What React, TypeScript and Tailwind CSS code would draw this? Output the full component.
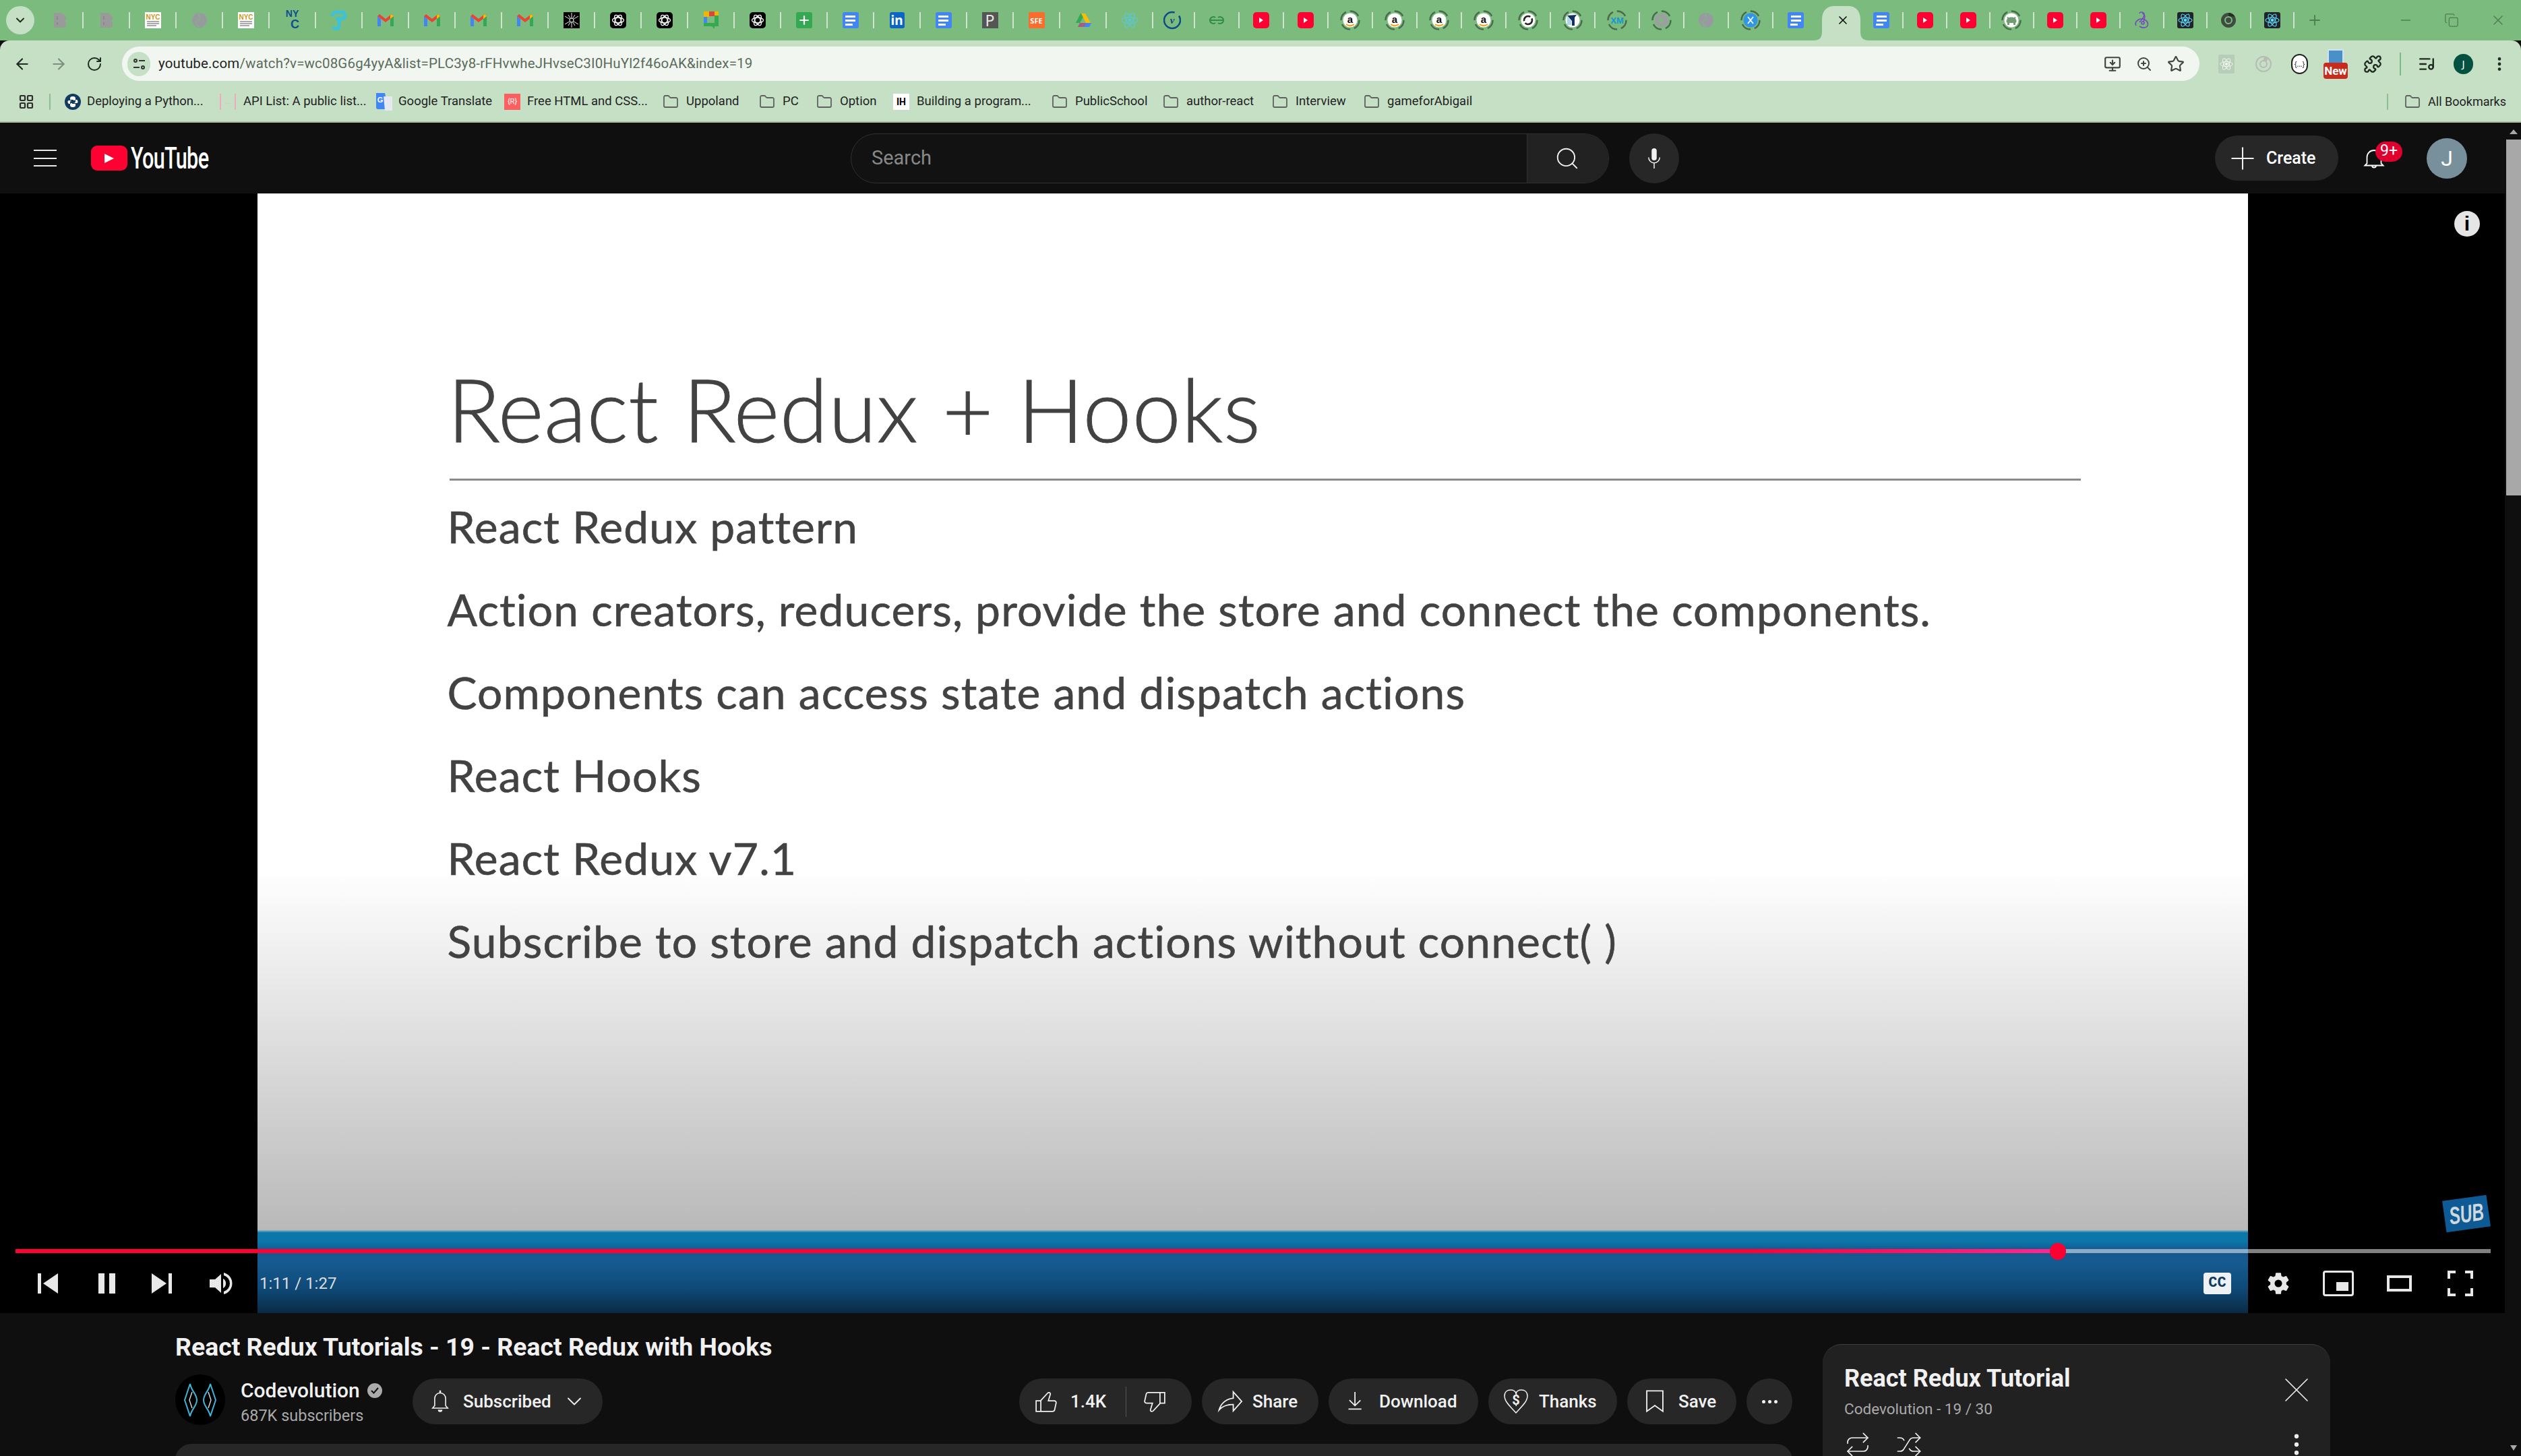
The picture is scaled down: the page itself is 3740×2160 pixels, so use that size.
import { ArrowLeft, ArrowRight, RotateCw, Star, ZoomIn, Puzzle, ListMusic, EllipsisVertical, Folder, LayoutGrid, Minus, Copy, X, Plus, Search, Repeat, Shuffle, ChevronDown, MonitorDown } from 'lucide-react';

type Kind =
  | 'gray' | 'nyc' | 'globe' | 'nycblue' | 'tp' | 'gmail' | 'web' | 'gpt' | 'meet' | 'sheets' | 'docs'
  | 'linkedin' | 'p' | 'sfe' | 'drive' | 'reactlight' | 'vcircle' | 'gfg' | 'yt' | 'amazon' | 'ringo'
  | 'ringy' | 'ringxm' | 'ringgray' | 'ringblue' | 'github' | 'redux' | 'reactdark' | 'chrome';

function Ring({ children }: { children: React.ReactNode }) {
  return (
    <svg width="30" height="30" viewBox="0 0 30 30">
      <circle cx="15" cy="15" r="13.5" fill="none" stroke="#4b6b4d" strokeWidth="2.5" strokeDasharray="15 6" />
      {children}
    </svg>
  );
}

function ReactAtom({ color, size = 24 }: { color: string; size?: number }) {
  return (
    <svg width={size} height={size} viewBox="0 0 24 24" fill="none" stroke={color} strokeWidth="1.2">
      <circle cx="12" cy="12" r="2" fill={color} />
      <ellipse cx="12" cy="12" rx="11" ry="4.3" />
      <ellipse cx="12" cy="12" rx="11" ry="4.3" transform="rotate(60 12 12)" />
      <ellipse cx="12" cy="12" rx="11" ry="4.3" transform="rotate(120 12 12)" />
    </svg>
  );
}

function Favicon({ kind }: { kind: Kind }) {
  switch (kind) {
    case 'gray':
      return (
        <svg width="24" height="24" viewBox="0 0 24 24">
          <path d="M3 1h12l6 6v5l-3 1 3 2v6l-3 2H3z" fill="#9a9a9a" />
          <path d="M8 6v5M8 15v4" stroke="#8a8a8a" strokeWidth="2" />
        </svg>
      );
    case 'nyc':
      return (
        <svg width="24" height="24" viewBox="0 0 24 24">
          <rect width="24" height="24" fill="#fff" />
          <text x="12" y="11" textAnchor="middle" fontSize="10" fontWeight="700" fill="#c79a1c" fontFamily="Liberation Sans">NYC</text>
          <path d="M3 14h18M3 17h18M3 20h14" stroke="#555" strokeWidth="1" />
        </svg>
      );
    case 'globe':
      return (
        <svg width="24" height="24" viewBox="0 0 24 24">
          <circle cx="12" cy="12" r="11" fill="#989aa0" />
          <path d="M12 2c-3 3 2 5 1 8s-5 1-6 5 4 6 5 7" stroke="#7bbb7e" strokeWidth="1.2" fill="none" />
        </svg>
      );
    case 'nycblue':
      return (
        <div className="w-[26px] h-[34px] flex flex-col items-center text-[#0f4c92] font-bold leading-none [font-family:'Liberation_Sans',sans-serif]">
          <span className="text-[14px]">NY</span>
          <span className="text-[18px] pl-[8px]">C</span>
        </div>
      );
    case 'tp':
      return (
        <svg width="26" height="30" viewBox="0 0 26 30" fill="none" stroke="#3cc3d8" strokeWidth="5">
          <path d="M8 13h9a5 5 0 0 0 0-10H9a6 6 0 0 0-6 6" />
          <path d="M13 10v14a4 4 0 0 1-8 0" />
        </svg>
      );
    case 'gmail':
      return (
        <svg width="24" height="18" viewBox="0 0 24 18">
          <path d="M0 3v15h5V7z" fill="#4285f4" />
          <path d="M19 7v11h5V3z" fill="#34a853" />
          <path d="M0 3l12 9 12-9-3-3-9 7-9-7z" fill="#ea4335" />
          <path d="M19 7l5-4-3-3-2 2z" fill="#fbbc04" />
        </svg>
      );
    case 'web':
      return (
        <svg width="24" height="24" viewBox="0 0 24 24">
          <rect width="24" height="24" fill="#000" />
          <path d="M12 1v22M2 6l20 12M22 6L2 18M7 4l10 16M17 4L7 20" stroke="#e8e8e8" strokeWidth="1" />
          <circle cx="12" cy="12" r="3" fill="#000" stroke="#fff" />
        </svg>
      );
    case 'gpt':
      return (
        <svg width="24" height="24" viewBox="0 0 24 24">
          <rect width="24" height="24" rx="5" fill="#000" />
          <g fill="none" stroke="#fff" strokeWidth="1.3">
            <ellipse cx="12" cy="12" rx="8.5" ry="4" />
            <ellipse cx="12" cy="12" rx="8.5" ry="4" transform="rotate(60 12 12)" />
            <ellipse cx="12" cy="12" rx="8.5" ry="4" transform="rotate(120 12 12)" />
          </g>
        </svg>
      );
    case 'meet':
      return (
        <svg width="24" height="28" viewBox="0 0 24 28">
          <path d="M1 1h8v8H1z" fill="#f4b400" />
          <path d="M9 1h8v7H9z" fill="#db4437" />
          <path d="M1 9h5v14H1z" fill="#4285f4" />
          <path d="M1 18h16v5H1z" fill="#34a853" />
          <path d="M17 1h6v22h-6v4l-4-4h4z" fill="#34a853" />
          <path d="M17 1h6v6h-6z" fill="#f4b400" />
        </svg>
      );
    case 'sheets':
      return (
        <div className="w-6 h-6 rounded-[3px] bg-[#34a853] flex items-center justify-center">
          <Plus size={20} strokeWidth={2.6} color="#fff" />
        </div>
      );
    case 'docs':
      return (
        <div className="w-6 h-6 rounded-[3px] bg-[#4285f4] flex flex-col items-center justify-center gap-[3px]">
          <div className="w-[15px] h-[3px] bg-white" />
          <div className="w-[15px] h-[3px] bg-white" />
          <div className="w-[11px] h-[3px] bg-white self-start ml-[4px]" />
        </div>
      );
    case 'linkedin':
      return (
        <div className="w-[22px] h-6 rounded-[3px] bg-[#0a66c2] flex items-center justify-center text-white text-[19px] font-bold leading-none">in</div>
      );
    case 'p':
      return <div className="w-6 h-6 bg-[#555555] flex items-center justify-center text-[#e8e8e8] text-[23px] leading-none">P</div>;
    case 'sfe':
      return <div className="w-6 h-6 rounded-[2px] bg-[#f96d2d] flex items-center justify-center text-white text-[11px] font-bold leading-none">SFE</div>;
    case 'drive':
      return (
        <svg width="24" height="24" viewBox="0 0 24 24">
          <path d="M8 2h7l-8 14H1z" fill="#34a853" />
          <path d="M9 2h6l8 14h-7z" fill="#fbbc04" />
          <path d="M4 22l3-6h17l-3 6z" fill="#4285f4" />
          <path d="M4 22l3-6h9l-3 6z" fill="#ea4335" opacity=".6" />
        </svg>
      );
    case 'reactlight':
      return <ReactAtom color="#5fc6cc" size={26} />;
    case 'vcircle':
      return (
        <svg width="26" height="30" viewBox="0 0 26 30">
          <circle cx="13" cy="15" r="12" fill="#7bbb7e" stroke="#0d4a86" strokeWidth="2.5" strokeDasharray="60 8" />
          <text x="13" y="20" textAnchor="middle" fontSize="15" fontStyle="italic" fontWeight="700" fill="#0d4a86" fontFamily="Liberation Serif">v</text>
        </svg>
      );
    case 'gfg':
      return (
        <svg width="24" height="14" viewBox="0 0 24 14" fill="none" stroke="#2f8d46" strokeWidth="2">
          <path d="M12 7H2a5 5 0 0 1 8-4M12 7h10a5 5 0 0 0-8-4M2 7a5 5 0 0 0 8 4M22 7a5 5 0 0 1-8 4" />
        </svg>
      );
    case 'yt':
      return (
        <div className="w-6 h-6 rounded-[5px] bg-[#ff0033] flex items-center justify-center">
          <div className="w-0 h-0 border-y-[4px] border-y-transparent border-l-[6px] border-l-white" />
        </div>
      );
    case 'amazon':
      return (
        <Ring>
          <circle cx="15" cy="15" r="10.5" fill="#fff" />
          <text x="15" y="19" textAnchor="middle" fontSize="15" fontWeight="700" fill="#111" fontFamily="Liberation Sans">a</text>
          <path d="M9 21c4 3 8 3 12 0" stroke="#f90" strokeWidth="1.8" fill="none" />
        </Ring>
      );
    case 'ringo':
      return (
        <Ring>
          <circle cx="15" cy="15" r="10.5" fill="#fff" />
          <circle cx="15" cy="15" r="6" fill="none" stroke="#222" strokeWidth="2.6" strokeDasharray="14 3" />
        </Ring>
      );
    case 'ringy':
      return (
        <Ring>
          <circle cx="15" cy="15" r="10.5" fill="#fff" />
          <path d="M7 8l7 8v7h4V11l3-4z" fill="#12305f" />
          <path d="M7 9l6 7v6H7z" fill="#a8d8ea" />
        </Ring>
      );
    case 'ringxm':
      return (
        <Ring>
          <text x="15" y="20" textAnchor="middle" fontSize="13" fontWeight="700" fill="#1296d8" fontFamily="Liberation Sans">XM</text>
        </Ring>
      );
    case 'ringgray':
      return (
        <Ring>
          <circle cx="15" cy="15" r="10" fill="#9c9ea3" />
          <path d="M12 9l7 6-7 6z" fill="#7bbb7e" />
        </Ring>
      );
    case 'ringblue':
      return (
        <Ring>
          <circle cx="15" cy="15" r="10.5" fill="#2f96e8" />
          <path d="M11 10l8 10M19 10l-8 10" stroke="#fff" strokeWidth="1.8" />
        </Ring>
      );
    case 'github':
      return (
        <Ring>
          <circle cx="15" cy="15" r="10.5" fill="#fff" />
          <path d="M9 22v-3c-2-1-2-4 0-6l-.4-3 3 1c2-.6 4.800-.6 6.800 0l3-1-.4 3c2 2 2 5 0 6v3h-3v-3h-6v3z" fill="#6f9c72" />
        </Ring>
      );
    case 'redux':
      return (
        <svg width="24" height="28" viewBox="0 0 24 28" fill="none" stroke="#764abc" strokeWidth="1.6">
          <path d="M12 4c4 0 5 5 2 12" />
          <path d="M8 4c0-3 7-3 7 2 0 3-5 9-7 11" />
          <path d="M3 22c-3-5 3-10 8-10 6 0 11 5 9 10-2 4-8 4-12 1" />
          <circle cx="13" cy="18" r="2" />
        </svg>
      );
    case 'reactdark':
      return (
        <div className="w-6 h-6 rounded-[3px] bg-[#20232a] flex items-center justify-center">
          <ReactAtom color="#61dafb" size={22} />
        </div>
      );
    case 'chrome':
      return (
        <svg width="24" height="24" viewBox="0 0 24 24">
          <circle cx="12" cy="12" r="11" fill="#3f4a40" />
          <path d="M12 1a11 11 0 0 1 9.500 5.500H12z" fill="#262d27" />
          <circle cx="12" cy="12" r="6" fill="#7bbb7e" />
          <circle cx="12" cy="12" r="4" fill="#3f4a40" />
        </svg>
      );
  }
}

const wideTabs: Kind[] = ['gray', 'gray', 'nyc', 'globe', 'nyc', 'nycblue', 'tp', 'gmail', 'gmail', 'gmail', 'gmail', 'web', 'gpt', 'gpt', 'meet', 'gpt', 'sheets', 'docs', 'linkedin', 'docs', 'p', 'sfe', 'drive', 'reactlight'];
const midTabs: Kind[] = ['vcircle', 'gfg', 'yt', 'yt', 'amazon', 'amazon', 'amazon', 'amazon', 'ringo', 'ringy', 'ringxm', 'ringgray', 'globe', 'ringblue'];
const narrowTabs: Kind[] = ['docs', 'yt', 'yt', 'github', 'yt', 'yt', 'redux', 'reactdark', 'chrome', 'reactdark'];

function TabStrip() {
  return (
    <div className="h-[60px] shrink-0 bg-[#7bbb7e] flex items-center pl-[9px]">
      <div className="w-[42px] h-[42px] rounded-full bg-[#c5e0c5] flex items-center justify-center">
        <ChevronDown size={20} strokeWidth={2.4} color="#1b2b1c" />
      </div>
      <div className="ml-[4px] flex items-center">
        {wideTabs.map((k, i) => (
          <div key={i} className="w-[69px] h-[24px] flex items-center justify-center border-r-2 border-[#cfe3cf]">
            <Favicon kind={k} />
          </div>
        ))}
      </div>
      <div className="-ml-[4px] flex items-center">
        {midTabs.map((k, i) => (
          <div key={i} className="w-[66px] h-[24px] flex items-center justify-center border-r-2 border-[#cfe3cf]">
            <Favicon kind={k} />
          </div>
        ))}
        <div className="w-[66px] h-[24px] flex items-center justify-center">
          <Favicon kind="docs" />
        </div>
      </div>
      <div className="relative w-[63px] h-[60px] flex items-center justify-center pl-[10px]">
        <svg className="absolute left-[-6px] bottom-0" width="81" height="51" viewBox="0 0 81 51">
          <path d="M0 51c9 0 12-5 12-13V20C12 7 19 0 30 0h21c11 0 18 7 18 20v18c0 8 3 13 12 13z" fill="#c5e0c5" />
        </svg>
        <X className="relative" size={20} strokeWidth={2} color="#111" />
      </div>
      <div className="flex items-center">
        {narrowTabs.map((k, i) => (
          <div key={i} className="w-[64.4px] h-[24px] flex items-center justify-center border-r-2 border-[#cfe3cf]">
            <Favicon kind={k} />
          </div>
        ))}
      </div>
      <Plus className="ml-[18px]" size={24} strokeWidth={1.8} color="#4f7d52" />
      <div className="ml-auto flex items-center pr-[22px] gap-[46px]">
        <Minus size={22} strokeWidth={1.6} color="#4f7d52" />
        <Copy size={22} strokeWidth={1.4} color="#4f7d52" />
        <X size={24} strokeWidth={1.4} color="#4f7d52" />
      </div>
    </div>
  );
}

function Toolbar() {
  return (
    <div className="h-[69px] shrink-0 bg-[#c5e0c5] rounded-t-[14px] flex items-start pt-[9px] text-[#1f1f1f]">
      <div className="w-[181px] h-[51px] flex items-center pl-[20px] gap-[28px]">
        <ArrowLeft size={26} strokeWidth={2} color="#1f2a20" />
        <ArrowRight size={26} strokeWidth={2} color="#7d8f7e" />
        <RotateCw size={24} strokeWidth={2} color="#1f2a20" />
      </div>
      <div className="w-[3082px] h-[51px] rounded-full bg-[#f1f7f0] flex items-center pl-[8px] pr-[22px]">
        <div className="w-[34px] h-[36px] rounded-full bg-[#c5e0c5] flex flex-col items-center justify-center gap-[4px]">
          <div className="flex items-center gap-[2px]">
            <div className="w-[6px] h-[6px] rounded-full border-2 border-[#333]" />
            <div className="w-[9px] h-[2px] bg-[#333]" />
          </div>
          <div className="flex items-center gap-[2px]">
            <div className="w-[9px] h-[2px] bg-[#333]" />
            <div className="w-[6px] h-[6px] rounded-full border-2 border-[#333]" />
          </div>
        </div>
        <div className="ml-[12px] text-[20.5px] [font-family:Roboto,sans-serif] tracking-[0.16px]">
          <span className="text-[#1f1f1f]">youtube.com</span>
          <span className="text-[#5b6b5c]">/watch?v=wc08G6g4yyA&amp;list=PLC3y8-rFHvwheJHvseC3I0HuYl2f46oAK&amp;index=19</span>
        </div>
        <div className="ml-auto flex items-center gap-[22px]">
          <MonitorDown size={26} strokeWidth={2} color="#444" />
          <ZoomIn size={24} strokeWidth={2} color="#444" />
          <Star size={26} strokeWidth={2} color="#444" />
        </div>
      </div>
      <div className="flex-1 h-[51px] flex items-center pl-[28px]">
        <div className="w-6 h-7 rounded-[2px] bg-[#b6ceb7] flex items-center justify-center">
          <ReactAtom color="#eef5ee" size={20} />
        </div>
        <svg className="ml-[30px]" width="26" height="30" viewBox="0 0 26 30" fill="none" stroke="#b4bcb4" strokeWidth="2">
          <circle cx="13" cy="15" r="11" />
          <circle cx="13" cy="15" r="5" />
          <circle cx="16" cy="8" r="2" fill="#b4bcb4" />
        </svg>
        <div className="ml-[28px] w-[25px] h-[30px] rounded-full bg-white border-2 border-[#222] flex items-center justify-center text-[10px] leading-none text-[#222]">{'{...}'}</div>
        <div className="ml-[23px] relative w-[36px] h-[44px] flex flex-col items-center">
          <div className="w-[24px] h-[22px] bg-[#4a90c8] border-2 border-[#cfe3f5]" />
          <div className="absolute bottom-0 w-[36px] h-[24px] rounded-[4px] bg-[#c92a1e] text-white text-[17px] font-bold leading-[24px] text-center [font-family:'Liberation_Sans_Narrow','Roboto',sans-serif]">New</div>
        </div>
        <Puzzle className="ml-[23px]" size={28} strokeWidth={2} color="#1f2a20" />
        <div className="ml-[26px] w-[2px] h-[34px] bg-[#7bbb7e]" />
        <ListMusic className="ml-[25px]" size={26} strokeWidth={2.2} color="#1f2a20" />
        <div className="ml-[27px] w-[29px] h-[30px] rounded-full bg-[#04513f] text-white text-[15px] flex items-center justify-center">J</div>
        <EllipsisVertical className="ml-[26px]" size={26} strokeWidth={2.4} color="#1f2a20" />
      </div>
    </div>
  );
}

function FolderMark({ label, cls }: { label: string; cls: string }) {
  return (
    <div className={`flex items-center gap-[11px] whitespace-nowrap ${cls}`}>
      <Folder size={24} strokeWidth={1.8} color="#5f6360" />
      <span>{label}</span>
    </div>
  );
}

function BookmarksBar() {
  return (
    <div className="h-[51px] shrink-0 bg-[#c5e0c5] flex items-center pb-[8px] text-[18.5px] leading-none text-[#1f1f1f] [font-family:Roboto,sans-serif]">
      <LayoutGrid className="ml-[27px]" size={24} strokeWidth={2.2} color="#2c2f2c" />
      <div className="ml-[22px] w-[2px] h-[24px] bg-[#8fbf91]" />
      <svg className="ml-[21px]" width="24" height="24" viewBox="0 0 24 24">
        <circle cx="12" cy="12" r="12" fill="#123a5e" />
        <path d="M12 4c-3 0-4 1-4 3v2h5v1H6c-2 0-2 4 0 5h2v-2c0-2 1-3 3-3h3c1 0 2-1 2-2V7c0-2-1-3-4-3z" fill="#fff" />
        <path d="M12 20c3 0 4-1 4-3v-2h-5v-1h7c2 0 2-4 0-5h-2v2c0 2-1 3-3 3h-3c-1 0-2 1-2 2v1c0 2 1 3 4 3z" fill="#fff" />
      </svg>
      <span className="ml-[9px] w-[197px] whitespace-nowrap">Deploying a Python...</span>
      <div className="w-6 h-6 border-x-2 border-[#f2a9c0] flex items-center justify-center text-[11px] text-[#f2a9c0]">...</div>
      <span className="ml-[11px] w-[197px] whitespace-nowrap">API List: A public list...</span>
      <svg width="24" height="26" viewBox="0 0 24 26">
        <path d="M0 0h13l5 24H3a3 3 0 0 1-3-3z" fill="#4285f4" />
        <path d="M11 5h13v21H13z" fill="#e6e9ef" />
        <text x="6" y="14" textAnchor="middle" fontSize="11" fontWeight="700" fill="#fff" fontFamily="Liberation Sans">G</text>
      </svg>
      <span className="ml-[9px] w-[157px] whitespace-nowrap">Google Translate</span>
      <div className="w-6 h-6 bg-[#fb5f5f] flex items-center justify-center text-[11px] text-white">{'{R}'}</div>
      <span className="ml-[10px] w-[201px] whitespace-nowrap">Free HTML and CSS...</span>
      <FolderMark label="Uppoland" cls="w-[143px]" />
      <FolderMark label="PC" cls="w-[85px]" />
      <FolderMark label="Option" cls="w-[114px]" />
      <div className="w-6 h-6 bg-white flex items-center justify-center text-[14px] font-bold text-black">IH</div>
      <span className="ml-[11px] w-[200px] whitespace-nowrap">Building a program...</span>
      <FolderMark label="PublicSchool" cls="w-[165px]" />
      <FolderMark label="author-react" cls="w-[162px]" />
      <FolderMark label="Interview" cls="w-[136px]" />
      <FolderMark label="gameforAbigail" cls="" />
      <div className="ml-auto w-[2px] h-[24px] bg-[#8fbf91]" />
      <FolderMark label="All Bookmarks" cls="ml-[24px] mr-[22px] text-[18px]" />
    </div>
  );
}

function YoutubeHeader() {
  return (
    <div className="h-[105px] shrink-0 flex items-center pr-[58px]">
      <div className="w-[1262px] shrink-0 flex items-center pl-[50px]">
        <div className="w-[34px] flex flex-col gap-[9.500px]">
          <div className="h-[2px] bg-[#e8e8e8]" />
          <div className="h-[2px] bg-[#e8e8e8]" />
          <div className="h-[2px] bg-[#e8e8e8]" />
        </div>
        <div className="ml-[51px] w-[54px] h-[37px] rounded-[9px] bg-[#ff0033] flex items-center justify-center">
          <div className="w-0 h-0 border-y-[7.500px] border-y-transparent border-l-[14px] border-l-white" />
        </div>
        <span className="ml-[5px] origin-left scale-x-[0.68] text-white text-[45px] leading-none tracking-[-1px] font-medium [font-family:Roboto,sans-serif]">YouTube</span>
      </div>
      <div className="w-[1125px] h-[74px] flex rounded-full border border-[#303030] bg-[#121212] overflow-hidden">
        <div className="flex-1 flex items-center pl-[30px] text-[29px] text-[#888888] [font-family:Roboto,sans-serif]">Search</div>
        <div className="w-[121px] bg-[#222222] border-l border-[#303030] flex items-center justify-center pr-[2px]">
          <Search size={38} strokeWidth={1.2} color="#f1f1f1" />
        </div>
      </div>
      <div className="ml-[30px] w-[74px] h-[74px] rounded-full bg-[#272727] flex items-center justify-center">
        <svg width="36" height="36" viewBox="0 0 24 24" fill="#f1f1f1">
          <rect x="9.500" y="2" width="5" height="12" rx="2.500" />
          <path d="M6 11a6 6 0 0 0 12 0h-1a5 5 0 0 1-10 0zM11.500 17h1v5h-1z" />
        </svg>
      </div>
      <div className="ml-auto w-[183px] h-[67px] rounded-full bg-[#272727] flex items-center pl-[14px] gap-[8px] text-white text-[25px] font-medium [font-family:Roboto,sans-serif]">
        <Plus size={54} strokeWidth={0.9} color="#f1f1f1" />
        <span>Create</span>
      </div>
      <div className="ml-[33px] relative w-[40px] h-[44px] flex items-center justify-center">
        <svg width="36" height="38" viewBox="0 0 24 24" fill="none" stroke="#fff" strokeWidth="1.2">
          <path d="M3 19l2-2v-6c0-4 3-7 7-7s7 3 7 7v6l2 2z" />
          <path d="M10 19a2 2 0 0 0 4 0" />
        </svg>
        <div className="absolute left-[22px] -top-[3px] w-[40px] h-[30px] rounded-[15px] bg-[#df0030] text-white text-[23px] leading-[28px] text-center [font-family:Roboto,sans-serif]">9+</div>
      </div>
      <div className="ml-[58px] w-[60px] h-[60px] rounded-full bg-[#78909c] flex items-center justify-center text-white text-[32px] [font-family:Roboto,sans-serif]">J</div>
    </div>
  );
}

const slideLines = [
  'React Redux pattern',
  'Action creators, reducers, provide the store and connect the components.',
  'Components can access state and dispatch actions',
  'React Hooks',
  'React Redux v7.1',
  'Subscribe to store and dispatch actions without connect( )',
];

function Video() {
  return (
    <div className="relative w-[3716px] h-[1661px] shrink-0 bg-black flex justify-center">
      <div className="w-[2953px] h-full flex flex-col">
        <div className="flex-1 bg-[linear-gradient(180deg,#ffffff_0,#ffffff_1003px,#b9b9b9_100%)] pl-[282px] pt-[254px] text-[#424242] [font-family:Lato,sans-serif]">
          <div className="text-[130px] leading-[130px] font-light tracking-[0.5px] whitespace-nowrap [-webkit-text-stroke:1px_#424242]">React Redux + Hooks</div>
          <div className="mt-[39px] ml-[3px] w-[2420px] h-[3px] bg-[#8a8a8a]" />
          <div className="mt-[6px]">
            {slideLines.map((l) => (
              <div key={l} className="text-[66px] leading-[123px] tracking-[1.1px] whitespace-nowrap [-webkit-text-stroke:0.6px_#424242]">{l}</div>
            ))}
          </div>
        </div>
        <div className="h-[123px] bg-[linear-gradient(180deg,#8fb4c2_0,#0b78aa_3%,#0b75a8_14%,#16588f_24%,#155a90_40%,#0f4a78_70%,#0a2a44_100%)]" />
      </div>

      <div className="absolute right-[24px] top-[1490px] w-[66px] h-[47px] -rotate-[8deg] bg-[#0e5a95] flex items-center justify-center text-[#cfd8dc] text-[36px] italic font-bold leading-none [font-family:'Liberation_Sans',sans-serif]">
        <span className="scale-x-[0.68]">SUB</span>
      </div>
      <div className="absolute right-[37px] top-[26px] w-[38px] h-[38px] rounded-full bg-[#e5e5e5] flex items-center justify-center text-black text-[30px] font-bold leading-none [font-family:'Liberation_Sans',sans-serif]">i</div>

      <div className="absolute inset-x-0 bottom-0 h-[95px] flex flex-col">
        <div className="ml-[23px] mr-[21px] h-[6px] flex relative">
          <div className="w-[3030px] bg-[linear-gradient(90deg,#ff0033_0,#ff0033_85%,#ff2791_100%)]" />
          <div className="flex-1 bg-white/50" />
          <div className="absolute left-[3018px] -top-[9.500px] w-[24px] h-[25px] rounded-full bg-[#ff0033]" />
        </div>
        <div className="mt-[13px] h-[64px] flex items-center pl-[56px] pr-[47px]">
          <svg width="30" height="30" viewBox="0 0 30 30" fill="#e8e8e8"><path d="M0 0h5v30H0zM30 0v30L8 15z" /></svg>
          <svg className="ml-[60px]" width="25" height="30" viewBox="0 0 25 30" fill="#e8e8e8"><path d="M0 0h9v30H0zM16 0h9v30h-9z" /></svg>
          <svg className="ml-[54px]" width="30" height="30" viewBox="0 0 30 30" fill="#e8e8e8"><path d="M25 0h5v30h-5zM0 0v30l22-15z" /></svg>
          <svg className="ml-[56px]" width="34" height="34" viewBox="0 0 34 34" fill="#e8e8e8">
            <path d="M0 11h8L17 3v28l-9-8H0z" />
            <path d="M20 10a8 8 0 0 1 0 14z" />
            <path d="M21 1a16.500 16.500 0 0 1 0 32v-4a12.500 12.500 0 0 0 0-24z" />
          </svg>
          <span className="ml-[40px] text-[24px] text-[#dddddd] [font-family:Roboto,sans-serif]">1:11 / 1:27</span>
          <div className="ml-auto w-[41px] h-[32px] rounded-[4px] bg-[#eef2f5] flex items-center justify-center text-[#0f3a62] text-[22px] font-black leading-none [font-family:'Liberation_Mono',monospace]">CC</div>
          <svg className="ml-[51px]" width="38" height="38" viewBox="0 0 24 24" fill="#e8e8e8">
            <path fillRule="evenodd" d="M19.430 12.980c.040-.320.070-.640.070-.980s-.030-.660-.070-.980l2.110-1.650a.5.5 0 0 0 .120-.640l-2-3.460a.5.5 0 0 0-.610-.220l-2.490 1a7.300 7.300 0 0 0-1.690-.980l-.380-2.650A.49.49 0 0 0 14 2h-4a.49.49 0 0 0-.490.420l-.380 2.650a7.700 7.700 0 0 0-1.690.980l-2.490-1a.49.49 0 0 0-.610.220l-2 3.460a.49.49 0 0 0 .120.640l2.110 1.650c-.040.320-.070.650-.070.980s.030.660.070.980l-2.110 1.650a.5.5 0 0 0-.120.640l2 3.460c.120.220.390.300.610.220l2.490-1c.520.400 1.080.730 1.690.980l.380 2.650c.030.240.240.420.490.420h4c.250 0 .460-.180.490-.420l.380-2.650a7.700 7.700 0 0 0 1.690-.980l2.490 1c.230.090.490 0 .610-.220l2-3.460a.5.5 0 0 0-.120-.640zM12 15.500a3.500 3.500 0 1 1 0-7 3.500 3.500 0 0 1 0 7z" />
          </svg>
          <div className="ml-[47px] w-[46px] h-[38px] rounded-[4px] border-[3px] border-[#e8e8e8] flex items-end justify-end p-[5px]">
            <div className="w-[18px] h-[13px] bg-[#e8e8e8]" />
          </div>
          <div className="ml-[49px] w-[37px] h-[24px] border-[4px] border-[#e8e8e8]" />
          <svg className="ml-[53px]" width="38" height="38" viewBox="0 0 38 38" fill="none" stroke="#e8e8e8" strokeWidth="4">
            <path d="M12 2H2v10M26 2h10v10M2 26v10h10M36 26v10H26" />
          </svg>
        </div>
      </div>
    </div>
  );
}

function ActionButton({ icon, label, cls }: { icon: React.ReactNode; label: string; cls: string }) {
  return (
    <div className={`h-[68px] rounded-full bg-[#272727] flex items-center text-[#f1f1f1] text-[26px] font-medium ${cls}`}>
      {icon}
      <span>{label}</span>
    </div>
  );
}

function BelowVideo() {
  return (
    <div className="flex-1 flex pl-[260px] [font-family:Roboto,sans-serif]">
      <div className="w-[2399px] shrink-0 pt-[28px]">
        <div className="text-[37.4px] leading-[44px] font-bold text-[#f1f1f1] whitespace-nowrap">React Redux Tutorials - 19 - React Redux with Hooks</div>
        <div className="mt-[19px] h-[75px] flex items-start">
          <div className="w-[74px] h-[75px] rounded-full bg-black flex items-center justify-center">
            <svg width="54" height="54" viewBox="0 0 54 54" fill="none" stroke="#3fb4d6" strokeWidth="2">
              <path d="M12 3C14 14 22 18 22 27c0 9-8 13-10 24M12 3L4 27l8 24M42 3c-2 11-10 15-10 24 0 9 8 13 10 24M42 3l8 24-8 24" />
              <path d="M15 15l-4 12 4 12M39 15l4 12-4 12" stroke="#d5dde0" strokeWidth="1.4" />
            </svg>
          </div>
          <div className="ml-[23px] w-[255px]">
            <div className="flex items-center gap-[11px] h-[40px] mt-[4px]">
              <span className="text-[30px] font-medium text-[#f1f1f1] leading-none">Codevolution</span>
              <div className="w-[22px] h-[22px] rounded-full bg-[#aaaaaa] flex items-center justify-center">
                <svg width="14" height="14" viewBox="0 0 14 14" fill="none" stroke="#0f0f0f" strokeWidth="2"><path d="M2 7l3.500 3.500L12 3" /></svg>
              </div>
            </div>
            <div className="text-[23.500px] text-[#aaaaaa] leading-none mt-[6px]">687K subscribers</div>
          </div>
          <div className="mt-[6px] w-[282px] h-[68px] rounded-full bg-[#272727] flex items-center pl-[26px] text-[#f1f1f1] text-[26px] font-medium">
            <svg width="30" height="38" viewBox="0 0 24 30" fill="none" stroke="#f1f1f1" strokeWidth="1.3">
              <path d="M3 23l2.500-3v-8c0-4 2.500-7 6.500-7s6.500 3 6.500 7v8l2.500 3z" />
              <path d="M12 5V2" strokeWidth="2" />
              <path d="M10 25a2 2 0 0 0 4 0" fill="#f1f1f1" />
            </svg>
            <span className="ml-[19px]">Subscribed</span>
            <ChevronDown className="ml-[16px]" size={36} strokeWidth={1.2} color="#f1f1f1" />
          </div>
          <div className="ml-auto mt-[6px] flex items-center gap-[15px]">
            <div className="w-[256px] h-[68px] rounded-full bg-[#272727] flex items-center pl-[19px] text-[#f1f1f1] text-[26px] font-medium">
              <svg width="42" height="42" viewBox="0 0 24 24" fill="#f1f1f1">
                <path d="M18.770 11h-4.230l1.520-4.940C16.380 5.030 15.540 4 14.380 4c-.580 0-1.140.240-1.520.650L7 11H3v10h14.430c1.060 0 1.980-.670 2.190-1.610l1.340-6c.270-1.240-.780-2.390-2.190-2.390zM7 20H4v-8h3zm12.980-6.830-1.340 6c-.100.480-.610.830-1.210.830H8v-8.610l5.600-6.060c.190-.210.480-.330.780-.330.260 0 .500.110.630.300.070.100.150.260.090.470l-1.520 4.940-.400 1.290h5.580c.410 0 .800.170 1.030.460.170.150.300.400.190.710z" />
              </svg>
              <span className="ml-[15px] w-[82px]">1.4K</span>
              <div className="w-[1px] h-[45px] bg-[#555555]" />
              <svg className="ml-[21px]" width="42" height="42" viewBox="0 0 24 24" fill="#f1f1f1">
                <path d="M17 4h-1H6.570C5.510 4 4.590 4.670 4.380 5.610l-1.340 6C2.770 12.850 3.820 14 5.230 14h4.230l-1.520 4.940C7.620 19.970 8.460 21 9.620 21c.580 0 1.140-.240 1.520-.650L17 14h4V4zm-6.600 15.670c-.190.210-.480.330-.780.330-.260 0-.500-.110-.630-.300-.070-.100-.150-.260-.090-.470l1.520-4.940.400-1.290H5.230c-.410 0-.800-.170-1.030-.460-.120-.150-.250-.400-.180-.710l1.340-6c.100-.480.610-.830 1.210-.830H16v8.610zM20 13h-3V5h3z" />
              </svg>
            </div>
            <ActionButton
              cls="w-[173px] pl-[20px]"
              label="Share"
              icon={
                <svg className="mr-[11px]" width="44" height="44" viewBox="0 0 24 24" fill="#f1f1f1">
                  <path d="M15 5.630 20.660 12 15 18.370V14h-1c-3.960 0-7.140 1-9.750 3.090 1.840-4.070 5.110-6.400 9.890-7.100l.860-.130V5.630M14 3v6C6.220 10.130 3.110 15.330 2 21c2.780-3.970 6.440-6 12-6v6l8-9-8-9z" />
                </svg>
              }
            />
            <ActionButton
              cls="w-[222px] pl-[19px]"
              label="Download"
              icon={
                <svg className="mr-[14px]" width="42" height="42" viewBox="0 0 24 24" fill="#f1f1f1">
                  <path d="M17 18v1H6v-1h11zm-.500-6.600-.700-.700-3.800 3.700V4h-1v10.400l-3.800-3.800-.700.700 5 5 5-4.900z" />
                </svg>
              }
            />
            <ActionButton
              cls="w-[191px] pl-[22px]"
              label="Thanks"
              icon={
                <div className="mr-[15px] relative w-[38px] h-[38px] flex items-center justify-center">
                  <svg className="absolute inset-0" width="38" height="38" viewBox="0 0 38 38" fill="none" stroke="#f1f1f1" strokeWidth="1.5">
                    <path d="M19 36C10 26 2 19 2 11 2 5 6 2 11 2c4 0 7 2 8 5 1-3 4-5 8-5 5 0 9 3 9 9 0 8-8 15-17 25z" />
                  </svg>
                  <span className="relative text-[20px] font-bold leading-none -mt-[4px]">$</span>
                </div>
              }
            />
            <ActionButton
              cls="w-[162px] pl-[19px]"
              label="Save"
              icon={
                <svg className="mr-[13px]" width="44" height="44" viewBox="0 0 24 24" fill="#f1f1f1">
                  <path d="M18 4v15.060l-5.420-3.870-.580-.420-.580.420L6 19.060V4h12m1-1H5v18l7-5 7 5V3z" />
                </svg>
              }
            />
            <div className="w-[68px] h-[68px] rounded-full bg-[#272727] flex items-center justify-center gap-[4px]">
              <div className="w-[5px] h-[5px] rounded-full bg-[#f1f1f1]" />
              <div className="w-[5px] h-[5px] rounded-full bg-[#f1f1f1]" />
              <div className="w-[5px] h-[5px] rounded-full bg-[#f1f1f1]" />
            </div>
          </div>
        </div>
        <div className="mt-[28px] h-[60px] rounded-t-[24px] bg-[#272727]" />
      </div>
      <div className="ml-[45px] mt-[46px] w-[753px] h-[300px] rounded-t-[28px] bg-[#212121] border-t border-[#3f3f3f] pl-[32px] pr-[18px] pt-[29px]">
        <div className="flex items-start justify-between">
          <div>
            <div className="text-[36px] leading-[42px] font-bold text-[#f1f1f1]">React Redux Tutorial</div>
            <div className="mt-[9px] text-[22.5px] leading-[30px] text-[#aaaaaa]">Codevolution - 19 / 30</div>
          </div>
          <X className="mt-[6px]" size={64} strokeWidth={0.6} color="#f1f1f1" />
        </div>
        <div className="mt-[17px] flex items-center">
          <Repeat size={40} strokeWidth={1} color="#f1f1f1" />
          <Shuffle className="ml-[36px]" size={40} strokeWidth={1} color="#f1f1f1" />
          <EllipsisVertical className="ml-auto mr-[11px]" size={42} strokeWidth={1.6} color="#f1f1f1" />
        </div>
      </div>
    </div>
  );
}

function Scrollbar() {
  return (
    <div className="w-[22px] shrink-0 flex flex-col items-center bg-[#0f0f0f] pt-[10px]">
      <div className="w-0 h-0 border-x-[6px] border-x-transparent border-b-[7px] border-b-[#a8a8a8]" />
      <div className="mt-[8px] w-full h-[528px] bg-[#a8a8a8]" />
      <div className="mt-auto mb-[8px] w-0 h-0 border-x-[5px] border-x-transparent border-t-[8px] border-t-[#a8a8a8]" />
    </div>
  );
}

export default function App() {
  return (
    <div className="w-[3740px] h-[2160px] overflow-hidden flex flex-col bg-[#0f0f0f]">
      <TabStrip />
      <Toolbar />
      <BookmarksBar />
      <div className="h-[2px] shrink-0 bg-[#a9bda6]" />
      <div className="flex-1 min-h-0 flex">
        <div className="w-[3718px] shrink-0 flex flex-col">
          <YoutubeHeader />
          <Video />
          <BelowVideo />
        </div>
        <Scrollbar />
      </div>
    </div>
  );
}
